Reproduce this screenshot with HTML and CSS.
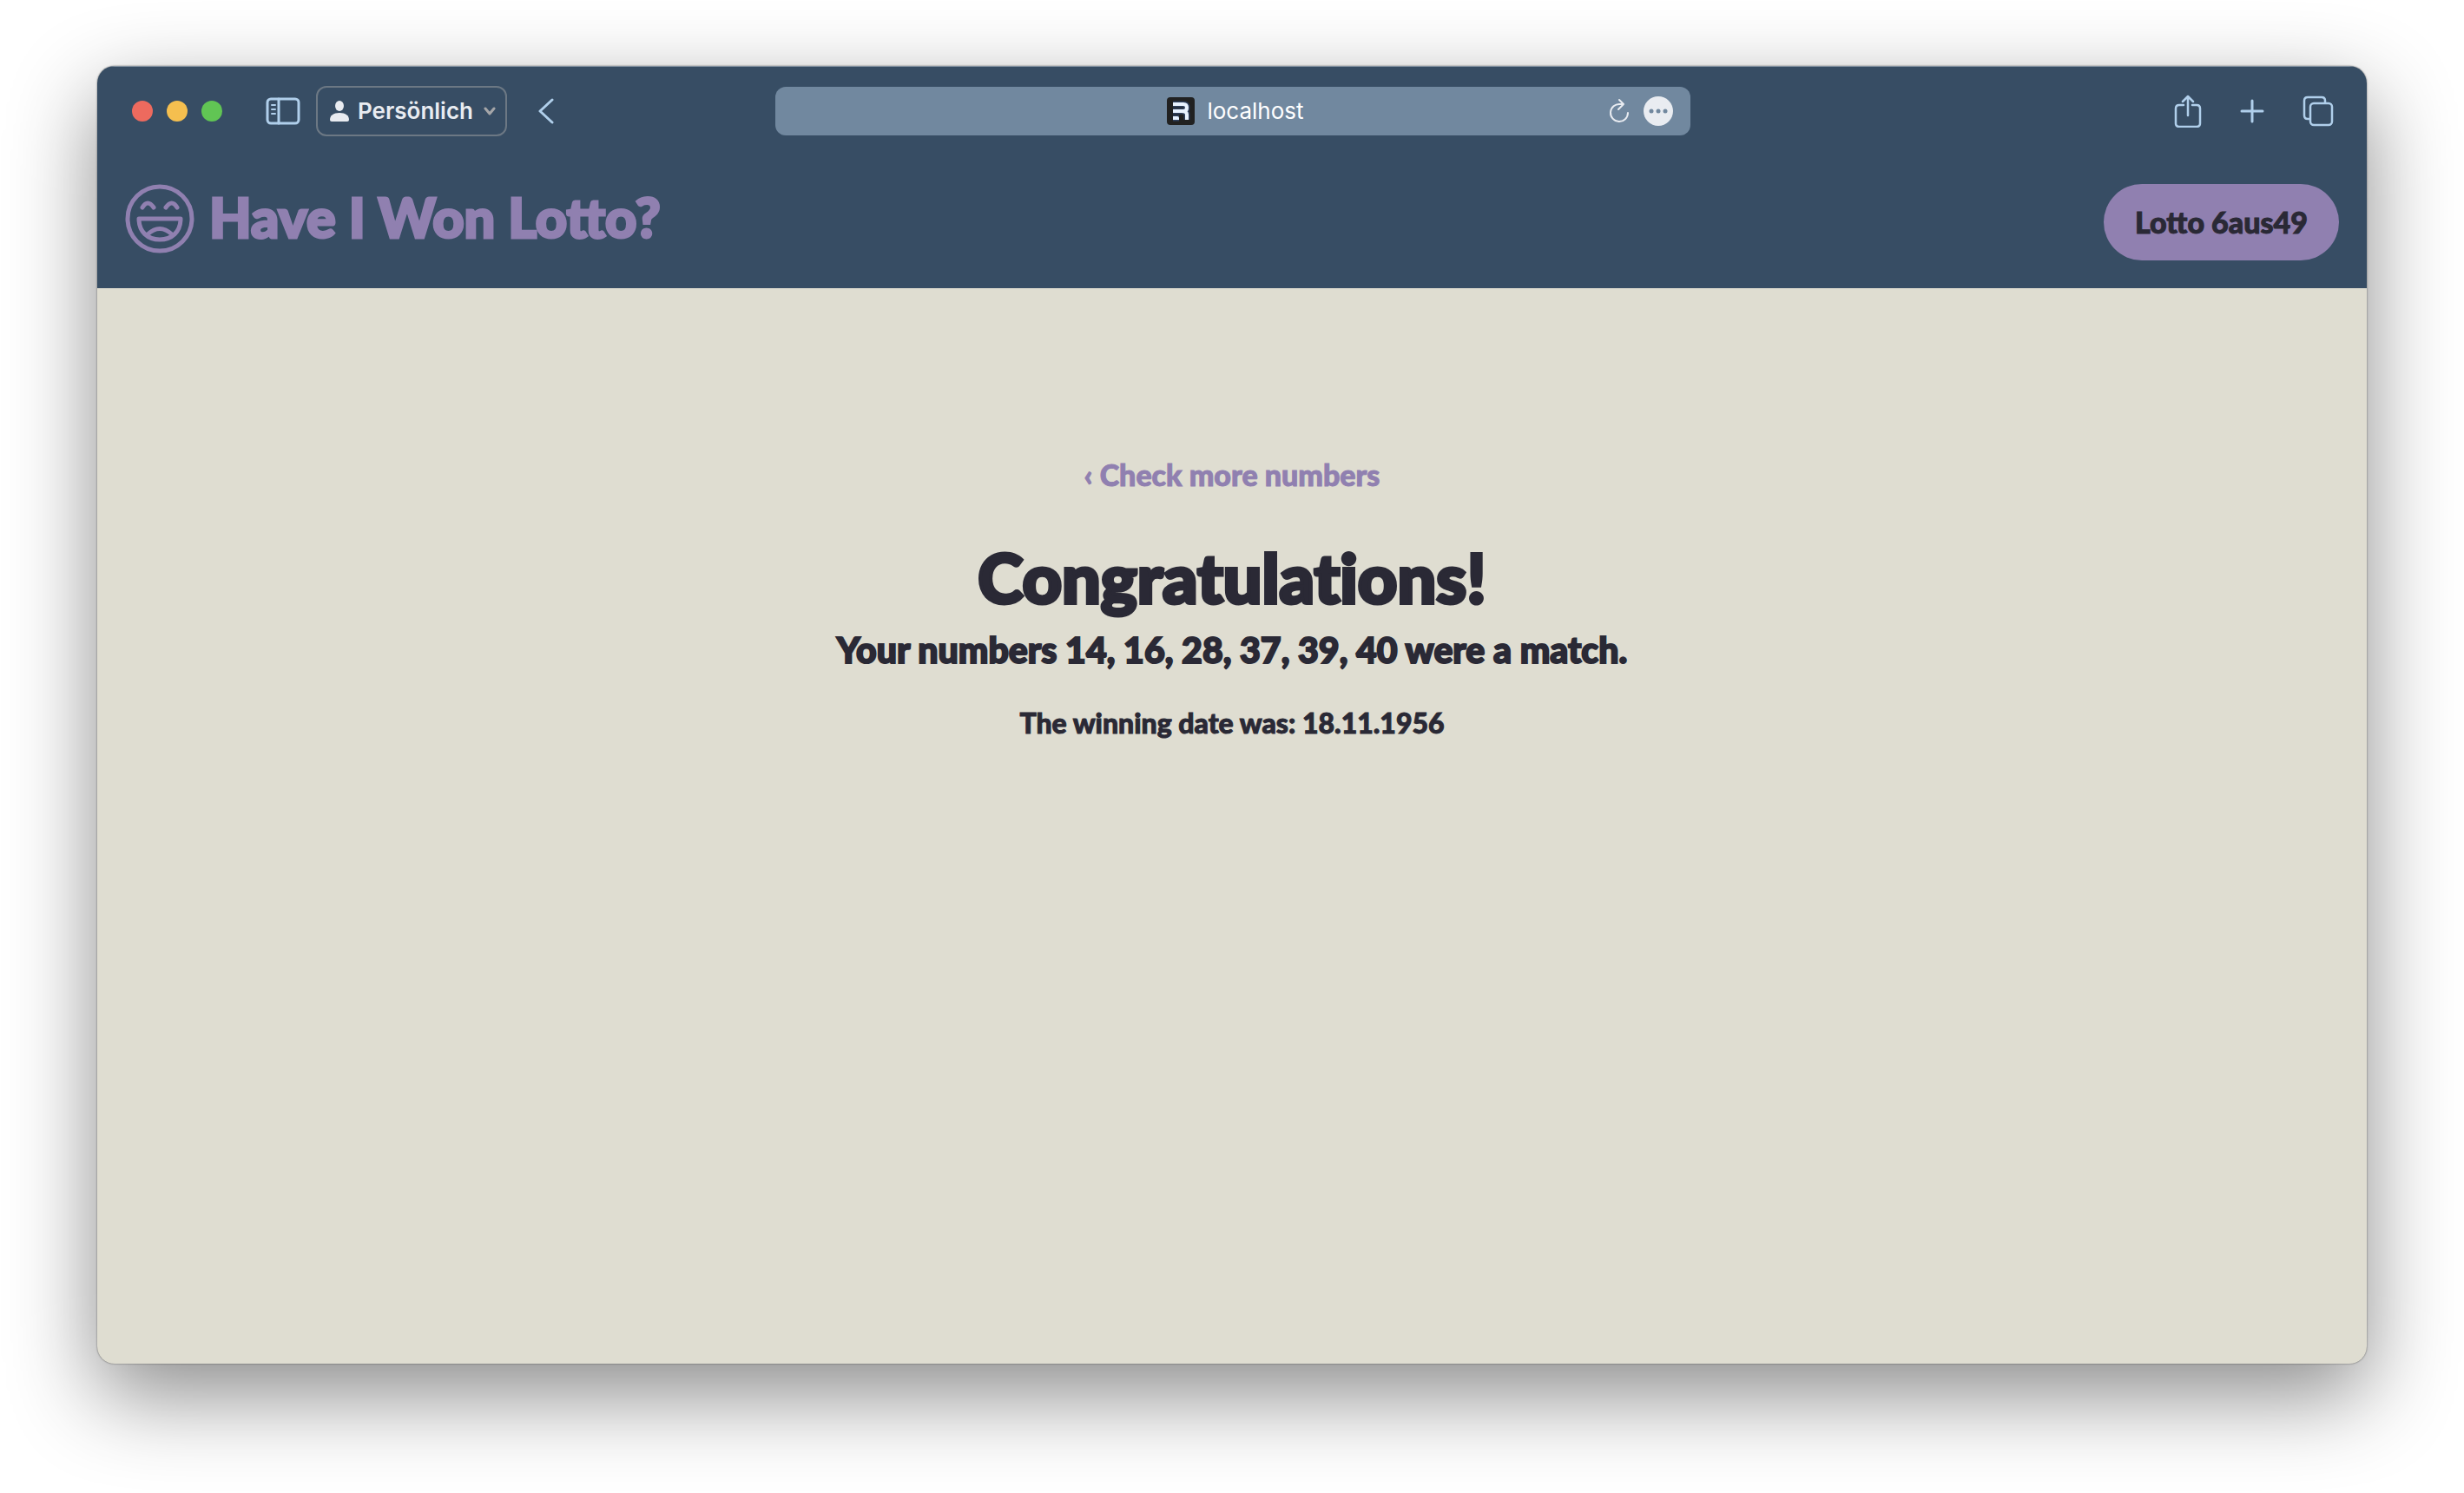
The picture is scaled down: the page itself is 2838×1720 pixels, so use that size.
FILE: index.html
```
<!DOCTYPE html>
<html lang="en">
<head>
<meta charset="utf-8">
<title>Have I Won Lotto?</title>
<link rel="stylesheet" href="styles.css">
</head>
<body>
<div class="window">
  <div class="toolbar">
    <div class="toolbar-left">
      <div class="lights">
        <button class="light light-close" aria-label="Close"></button>
        <button class="light light-min" aria-label="Minimise"></button>
        <button class="light light-max" aria-label="Zoom"></button>
      </div>
      <button class="icon-btn" aria-label="Sidebar">
        <svg width="40" height="32" viewBox="0 0 40 32" fill="none" stroke="currentColor" stroke-width="3" stroke-linecap="round"><rect x="2" y="2" width="36" height="28" rx="4"/><path d="M15 2v28"/><path stroke-width="2" d="M7 9h4M7 14h4M7 19h4"/></svg>
      </button>
      <button class="profile">
        <svg width="22" height="24" viewBox="0 0 22 24" fill="currentColor"><ellipse cx="11" cy="6" rx="5" ry="6"/><path d="M0 22c0-5 4-8 11-8s11 3 11 8c0 1-1 2-2 2H2c-1 0-2-1-2-2z"/></svg>
        <span>Persönlich</span>
        <svg class="chevron" width="14" height="10" viewBox="0 0 14 10" fill="none" stroke="currentColor" stroke-width="3" stroke-linecap="round" stroke-linejoin="round"><path d="M2 2l5 6 5-6"/></svg>
      </button>
      <button class="icon-btn back" aria-label="Back">
        <svg width="18" height="30" viewBox="0 0 18 30" fill="none" stroke="currentColor" stroke-width="3" stroke-linecap="round" stroke-linejoin="round"><path d="M16 2L2 15l14 13"/></svg>
      </button>
    </div>
    <div class="address">
      <div class="site">
        <svg width="32" height="32" viewBox="0 0 32 32"><rect width="32" height="32" rx="4" fill="#212121"/><path fill="none" stroke="#3e5f9c" stroke-opacity=".5" stroke-width="7" d="M7 8h12q4 0 4 4t-4 4H7M17 16q6 0 6 4v6M7 24h7"/><path fill="none" stroke="#e8f2ff" stroke-width="4" d="M7 8h12q4 0 4 4t-4 4H7M17 16q6 0 6 4v6"/><path fill="#e8f2ff" d="M7 22h5q2 0 2 2v2H7z"/></svg>
        <span>localhost</span>
      </div>
      <button class="address-btn" aria-label="Reload">
        <svg width="24" height="30" viewBox="0 0 24 30" fill="none" stroke="currentColor" stroke-width="2" stroke-linecap="round" stroke-linejoin="round"><path d="M17 7H13A10 10 0 1 0 22 17M12 2l5 5-6 6"/></svg>
      </button>
      <button class="address-btn" aria-label="Page menu">
        <svg width="34" height="34" viewBox="0 0 34 34"><circle cx="17" cy="17" r="17" fill="currentColor"/><g fill="#71889f"><circle cx="9" cy="17" r="2.500"/><circle cx="17" cy="17" r="2.500"/><circle cx="25" cy="17" r="2.500"/></g></svg>
      </button>
    </div>
    <div class="toolbar-right">
      <button class="icon-btn" aria-label="Share">
        <svg width="32" height="38" viewBox="0 0 32 38" fill="none" stroke="currentColor" stroke-width="2.500" stroke-linecap="round" stroke-linejoin="round"><path d="M11 12H6q-4 0-4 4v17q0 4 4 4h20q4 0 4-4V16q0-4-4-4h-5M16 24V2M10 8l6-6 6 6"/></svg>
      </button>
      <button class="icon-btn" aria-label="New tab">
        <svg width="28" height="28" viewBox="0 0 28 28" fill="none" stroke="currentColor" stroke-width="3" stroke-linecap="round"><path d="M14 2v24M2 14h24"/></svg>
      </button>
      <button class="icon-btn" aria-label="Tab overview">
        <svg width="36" height="36" viewBox="0 0 36 36" fill="none" stroke="currentColor" stroke-width="2.500"><rect x="9" y="9" width="25" height="25" rx="4"/><path d="M9 27H6q-4 0-4-4V6q0-4 4-4h16q4 0 4 4v3"/></svg>
      </button>
    </div>
  </div>
  <header class="site-header">
    <a class="brand" href="#">
      <svg width="80" height="80" viewBox="0 0 80 80" fill="none" stroke="currentColor" stroke-width="5" stroke-linecap="round" stroke-linejoin="round"><circle cx="40" cy="40" r="37"/><path d="M20 27q6-10 13 0M47 27q7-10 13 0M16 40h48c0 15-10 24-24 24S16 55 16 40zM26 58q14-13 28 0"/></svg>
      <span>Have I Won Lotto?</span>
    </a>
    <a class="pill" href="#">Lotto 6aus49</a>
  </header>
  <main class="content">
    <a class="more" href="#">‹ Check more numbers</a>
    <h1>Congratulations!</h1>
    <h2>Your numbers 14, 16, 28, 37, 39, 40 were a match.</h2>
    <p>The winning date was: 18.11.1956</p>
  </main>
</div>
</body>
</html>
```
FILE: styles.css
```
* { box-sizing: border-box; }
body {
  margin: 0;
  padding: 76px 112px 149px;
  min-height: 100vh;
  display: flex;
  background: #fff;
  font-family: Lato, "Open Sans", sans-serif;
  font-weight: 900;
  color: #2a2935;
}
button {
  border: 0;
  padding: 0;
  background: none;
  color: inherit;
  font: inherit;
}
a { color: inherit; text-decoration: none; }
svg { display: block; flex: none; }

.window {
  flex: 1;
  display: flex;
  flex-direction: column;
  overflow: hidden;
  border-radius: 20px;
  background: #dfddd1;
  box-shadow: 0 0 2px rgba(0, 0, 0, .6), 0 36px 100px rgba(0, 0, 0, .46);
}

.toolbar {
  display: grid;
  grid-template-columns: 1fr 1054px 1fr;
  align-items: center;
  height: 104px;
  padding: 0 38px 2px 40px;
  background: #374d64;
  color: #b0cfeb;
  font-family: Inter, "Liberation Sans", sans-serif;
  border-top: 1px solid #8493a2;
}
.toolbar-left, .toolbar-right, .lights, .profile, .address, .site, .brand {
  display: flex;
  align-items: center;
}
.lights { gap: 16px; margin-right: 50px; }
.light { width: 24px; height: 24px; border-radius: 50%; }
.light-close { background: #ed6a5e; }
.light-min { background: #f5bf4f; }
.light-max { background: #61c554; }
.profile {
  height: 58px;
  width: 220px;
  margin: 0 36px 0 18px;
  padding: 0 11px 0 14px;
  gap: 10px;
  border: 2px solid #6c7884;
  border-radius: 12px;
  color: #e9ecf1;
  font-size: 26px;
  font-weight: 600;
}
.chevron { margin-left: auto; color: #a5a6a8; }
.address {
  justify-content: flex-end;
  height: 56px;
  padding-right: 20px;
  gap: 16px;
  border-radius: 12px;
  background: #71889f;
  color: #e9ecf1;
}
.site {
  flex: 1;
  justify-content: center;
  gap: 14px;
  padding-left: 116px;
  color: #fff;
  font-size: 26px;
  font-weight: 400;
}
.toolbar-right { justify-content: flex-end; gap: 44px; }

.site-header {
  display: flex;
  align-items: center;
  justify-content: space-between;
  height: 152px;
  padding: 0 32px;
  background: #374d64;
}
.brand {
  gap: 17px;
  padding-bottom: 8px;
  color: #9080b0;
  font-size: 63px;
  line-height: 72px;
  -webkit-text-stroke: 3px;
}
.brand span { padding-bottom: 4px; }
.pill {
  padding: 22px 36px;
  border-radius: 44px;
  background: #9080b0;
  font-size: 34px;
  line-height: 44px;
  -webkit-text-stroke: 1px;
}

.content {
  flex: 1;
  display: flex;
  flex-direction: column;
  align-items: center;
  padding-top: 191px;
  text-align: center;
}
.more {
  color: #9080b0;
  font-size: 34px;
  line-height: 48px;
  -webkit-text-stroke: 1px;
}
h1, h2, p { margin: 0; font-weight: 900; }
h1 {
  margin-top: 46px;
  font-size: 79px;
  line-height: 96px;
  font-variant-ligatures: none;
  -webkit-text-stroke: 4px;
}
h2 {
  margin-top: 8px;
  font-size: 41px;
  line-height: 56px;
  -webkit-text-stroke: 2px;
}
p {
  margin-top: 32px;
  font-size: 32px;
  line-height: 48px;
  -webkit-text-stroke: 1px;
}
```
